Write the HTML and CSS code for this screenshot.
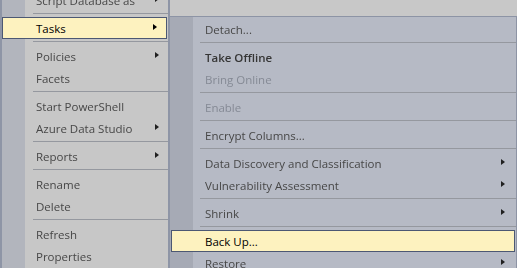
FILE: index.html
```html
<!DOCTYPE html>
<html>
<head>
<meta charset="utf-8">
<link rel="stylesheet" href="styles.css">
</head>
<body>
<div class="screen">
  <div class="menu main-menu">
    <div class="item"><span class="label">Script Database as</span><span class="arrow"></span></div>
    <div class="sep"></div>
    <div class="item hl"><span class="label">Tasks</span><span class="arrow"></span></div>
    <div class="sep"></div>
    <div class="item"><span class="label">Policies</span><span class="arrow"></span></div>
    <div class="item"><span class="label">Facets</span></div>
    <div class="sep"></div>
    <div class="item"><span class="label">Start PowerShell</span></div>
    <div class="item"><span class="label">Azure Data Studio</span><span class="arrow"></span></div>
    <div class="sep"></div>
    <div class="item"><span class="label">Reports</span><span class="arrow"></span></div>
    <div class="sep"></div>
    <div class="item"><span class="label">Rename</span></div>
    <div class="item"><span class="label">Delete</span></div>
    <div class="sep"></div>
    <div class="item"><span class="label">Refresh</span></div>
    <div class="item"><span class="label">Properties</span></div>
  </div>
  <div class="right">
    <div class="top-strip"></div>
    <div class="menu sub-menu">
      <div class="item"><span class="label">Detach...</span></div>
      <div class="sep"></div>
      <div class="item"><span class="label bold">Take Offline</span></div>
      <div class="item disabled"><span class="label">Bring Online</span></div>
      <div class="sep"></div>
      <div class="item disabled"><span class="label">Enable</span></div>
      <div class="sep"></div>
      <div class="item"><span class="label">Encrypt Columns...</span></div>
      <div class="sep"></div>
      <div class="item"><span class="label">Data Discovery and Classification</span><span class="arrow"></span></div>
      <div class="item"><span class="label">Vulnerability Assessment</span><span class="arrow"></span></div>
      <div class="sep"></div>
      <div class="item"><span class="label">Shrink</span><span class="arrow"></span></div>
      <div class="sep"></div>
      <div class="item hl"><span class="label">Back Up...</span></div>
      <div class="item"><span class="label">Restore</span><span class="arrow"></span></div>
    </div>
  </div>
</div>
</body>
</html>
```

FILE: styles.css
```css
html, body {
  margin: 0;
  padding: 0;
  width: 517px;
  height: 268px;
  overflow: hidden;
  background: #c7c7c7;
}

.screen {
  display: flex;
  align-items: flex-start;
  width: 517px;
  height: 268px;
  overflow: hidden;
  font-family: "Open Sans", "Noto Sans", sans-serif;
  font-size: 11.5px;
}

.menu {
  display: flex;
  flex-direction: column;
}

.main-menu {
  width: 166px;
  margin-top: -11px;
  padding-bottom: 40px;
  border-left: 2px solid #8e95a6;
  border-right: 2px solid #8e95a6;
  background: linear-gradient(to right, #b2b5bd 0, #b2b5bd 23px, #c7c7c7 23px);
}

.right {
  display: flex;
  flex-direction: column;
  width: 347px;
}

.top-strip {
  height: 16px;
  background: #c8c8c8;
}

.sub-menu {
  border-top: 1px solid #8d94a5;
  border-right: 1px solid #8d94a5;
  padding-top: 1px;
  padding-bottom: 40px;
  background: linear-gradient(to right, #a6aab5 0, #a6aab5 23px, #b6bac5 23px);
}

.item {
  position: relative;
  display: flex;
  align-items: center;
  height: 22px;
  box-sizing: border-box;
  padding-left: 34px;
  color: #474747;
}

.sub-menu .item {
  padding-left: 35px;
}

.item .label {
  display: inline-block;
  filter: blur(0.7px);
  white-space: nowrap;
}

.item .label.bold {
  font-weight: 600;
  color: #353535;
}

.item.disabled {
  color: #858a95;
}

.item.hl {
  background: #fdf2bf;
  border: 1px solid #4c5873;
  color: #000;
  margin-right: 1px;
  padding-left: 33px;
}

.sub-menu .item.hl {
  margin-left: 1px;
  margin-right: 1px;
  padding-left: 33px;
}

.item.hl .label {
  filter: none;
}

.arrow {
  position: absolute;
  right: 9px;
  top: 7px;
  width: 0;
  height: 0;
  border-top: 3.5px solid transparent;
  border-bottom: 3.5px solid transparent;
  border-left: 4px solid #202020;
  filter: blur(0.5px);
}

.item.hl .arrow {
  filter: none;
  border-left-color: #000;
  right: 9px;
  top: 6px;
}

.sub-menu .arrow {
  right: 11px;
}

.sep {
  height: 6px;
  margin-left: 31px;
  position: relative;
}

.sep::after {
  content: "";
  position: absolute;
  left: 0;
  right: 0;
  top: 2px;
  height: 1px;
  background: #95989f;
  filter: blur(0.4px);
}

.sub-menu .sep {
  margin-left: 30px;
}
```
